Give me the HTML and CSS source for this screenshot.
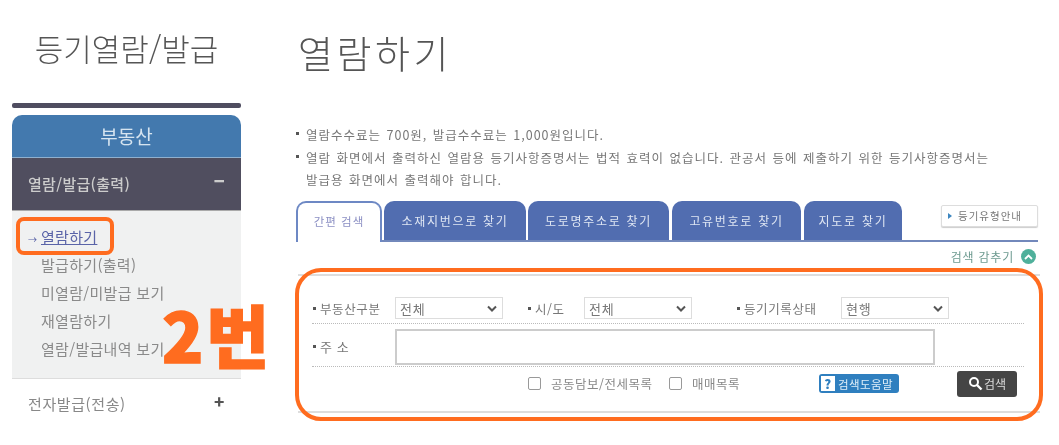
FILE: index.html
```html
<!DOCTYPE html>
<html lang="ko">
<head>
<meta charset="utf-8">
<title>열람하기</title>
<link rel="stylesheet" href="styles.css">
</head>
<body>
<div class="page">
  <aside class="side">
    <h2 class="side-title">등기열람/발급</h2>
    <div class="side-bar"></div>
    <div class="side-head">부동산</div>
    <div class="menu-open"><span>열람/발급(출력)</span><b class="sign">−</b></div>
    <ul class="sub">
      <li class="active"><span class="arrow">→</span><a href="#">열람하기</a><span class="mark-box"></span></li>
      <li>발급하기(출력)</li>
      <li>미열람/미발급 보기</li>
      <li>재열람하기</li>
      <li>열람/발급내역 보기</li>
    </ul>
    <div class="menu-closed"><span>전자발급(전송)</span><b class="sign">+</b></div>
    <div class="big-mark">2번</div>
  </aside>
  <main class="main">
    <h1 class="title">열람하기</h1>
    <ul class="notes">
      <li>열람수수료는 700원, 발급수수료는 1,000원입니다.</li>
      <li>열람 화면에서 출력하신 열람용 등기사항증명서는 법적 효력이 없습니다. 관공서 등에 제출하기 위한 등기사항증명서는<br>발급용 화면에서 출력해야 합니다.</li>
    </ul>
    <div class="tabs">
      <div class="tab on t1">간편 검색</div>
      <div class="tab t2">소재지번으로 찾기</div>
      <div class="tab t3">도로명주소로 찾기</div>
      <div class="tab t4">고유번호로 찾기</div>
      <div class="tab t5">지도로 찾기</div>
      <div class="guide"><i class="tri"></i>등기유형안내</div>
    </div>
    <div class="hide-row">검색 감추기<span class="circle"><svg width="9" height="6" viewBox="0 0 9 6"><path d="M1 5 4.500 1.500 8 5" fill="none" stroke="#fff" stroke-width="1.800"/></svg></span></div>
    <form class="form">
      <div class="row r1">
        <label class="lbl l1">부동산구분</label>
        <select class="sel"><option>전체</option></select>
        <label class="lbl l2">시/도</label>
        <select class="sel"><option>전체</option></select>
        <label class="lbl l3">등기기록상태</label>
        <select class="sel"><option>현행</option></select>
      </div>
      <div class="row r2">
        <label class="lbl l1 addr">주 소</label>
        <input class="addr-input" type="text">
      </div>
      <div class="r3">
        <input class="chk c1" type="checkbox"><span class="chk-text">공동담보/전세목록</span>
        <input class="chk c2" type="checkbox"><span class="chk-text">매매목록</span>
        <span class="help"><b class="q">?</b>검색도움말</span>
        <span class="search"><svg width="15" height="15" viewBox="0 0 15 15"><circle cx="6" cy="6" r="4" fill="none" stroke="#fff" stroke-width="2"/><path d="M9 9l4.500 4.500" stroke="#fff" stroke-width="2.400"/></svg>검색</span>
      </div>
      <span class="form-mark"></span>
    </form>
  </main>
</div>
</body>
</html>
```
FILE: styles.css
```css
* { box-sizing: border-box; }
html, body { margin: 0; padding: 0; background: #fff; }
body { font-family: "Noto Sans CJK KR", "Noto Sans", sans-serif; color: #777; width: 1059px; height: 445px; overflow: hidden; }
ul { list-style: none; margin: 0; padding: 0; }
.page { display: flex; padding-left: 12px; filter: blur(0.6px); }
.side { position: relative; width: 229px; margin-right: 55px; flex: none; }
.side-title { margin: 0; height: 103px; padding-top: 25px; text-align: center; font-size: 31px; line-height: 46px; font-weight: 300; color: #555; white-space: nowrap; }
.side-bar { height: 5px; background: #4f4d60; border-radius: 2px; margin-bottom: 7px; }
.side-head { height: 43px; background: #4379ae; border-radius: 10px 10px 0 0; color: #d6e4f0; text-align: center; font-size: 19px; line-height: 41px; border-bottom: 1px solid #8fb0cf; }
.menu-open { height: 53px; background: #504e5f; color: #ccc; font-size: 15px; letter-spacing: 0.3px; display: flex; justify-content: space-between; align-items: center; padding: 0 16px 2px; border-bottom: 1px solid #aaa; font-weight: 500; }
.sign { font-size: 18px; font-weight: 900; line-height: 1; position: relative; top: -3px; }
.sub { height: 168px; background: #f0f1f1; padding-top: 12px; border-bottom: 1px solid #ddd; font-size: 15px; letter-spacing: 0.3px; }
.sub li { position: relative; height: 28px; line-height: 28px; padding-left: 29px; color: #8a8a8a; white-space: nowrap; }
.sub .active { color: #5a64a8; padding-left: 16px; }
.arrow { display: inline-block; width: 13px; font-size: 9px; }
.active a { color: #5a64a8; text-decoration: underline; }
.mark-box { position: absolute; left: 4px; top: -6px; width: 98px; height: 38px; border: 4px solid #ff6c1f; border-radius: 8px; }
.menu-closed { height: 49px; color: #888; font-size: 15px; letter-spacing: 0.6px; display: flex; justify-content: space-between; align-items: center; padding: 0 16px; }
.menu-closed .sign { color: #555; font-size: 17px; }
.big-mark { position: absolute; left: 150px; top: 286px; font-size: 68px; line-height: 96px; font-weight: 900; color: #ff6c1f; -webkit-text-stroke: 1.5px #ff6c1f; letter-spacing: 3px; white-space: nowrap; }
.main { position: relative; width: 742px; flex: none; }
.title { margin: 0; height: 124px; padding: 27px 0 0 2px; font-size: 38px; line-height: 50px; font-weight: 300; color: #555; letter-spacing: 3.5px; }
.notes { font-size: 12.5px; line-height: 22.500px; color: #777; height: 77px; letter-spacing: 1px; word-spacing: 1px; }
.notes li { position: relative; padding-left: 10px; }
.notes li::before { content: ""; position: absolute; left: 0; top: 8px; width: 3px; height: 3px; background: #555; }
.tabs { display: flex; align-items: flex-start; height: 41px; border-bottom: 2px solid #7288bb; position: relative; }
.tab { height: 39px; margin-right: 2px; background: #516db0; color: #dfe6f3; border-radius: 10px 10px 0 0; font-size: 12px; line-height: 40px; text-align: center; letter-spacing: 1.7px; flex: none; }
.tab.on { background: #fff; color: #8c90c4; border: 2px solid #6d88c4; border-bottom: 0; height: 41px; font-size: 11.5px; line-height: 36px; letter-spacing: 1px; }
.t1 { width: 86px; }
.t2 { width: 142px; }
.t3 { width: 141px; margin-right: 3px; }
.t4 { width: 129px; margin-right: 3px; }
.t5 { width: 98px; }
.guide { margin: 4px 0 0 37px; width: 98px; height: 22px; border: 1px solid #ddd; border-radius: 2px; box-shadow: 0 1px 1px #ccc; font-size: 10.5px; line-height: 20px; color: #777; display: flex; align-items: center; padding-left: 6px; white-space: nowrap; letter-spacing: 1px; background: #fff; }
.tri { width: 0; height: 0; border-left: 4px solid #3d86c0; border-top: 3px solid transparent; border-bottom: 3px solid transparent; margin-right: 6px; }
.hide-row { height: 28px; display: flex; justify-content: flex-end; align-items: center; font-size: 12px; color: #6d9a90; letter-spacing: 0.8px; padding-top: 1px; padding-right: 2px; }
.circle { width: 15px; height: 15px; border-radius: 50%; background: #4fb09b; margin-left: 7px; display: flex; align-items: center; justify-content: center; }
.form { position: relative; margin: 4px -2px 0 2px; height: 139px; border-top: 2px solid #ddd; border-bottom: 2px solid #ddd; padding: 0 16px 0 14px; font-size: 12px; color: #777; }
.row { display: flex; align-items: center; border-bottom: 1px dotted #bbb; }
.r1 { height: 48px; padding-top: 21px; padding-bottom: 4px; }
.r2 { height: 43px; padding-top: 3px; }
.lbl { position: relative; padding-left: 8px; flex: none; white-space: nowrap; font-size: 12.5px; letter-spacing: 0.6px; }
.lbl::before { content: ""; position: absolute; left: 1px; top: 8px; width: 3px; height: 3px; background: #555; }
.l1 { width: 83px; }
.l2 { width: 57px; margin-left: 24px; }
.l3 { width: 105px; margin-left: 44px; }
.addr { font-size: 13px; }
.sel { appearance: none; width: 108px; height: 22px; flex: none; border: 1px solid #ddd; color: #777; font-family: inherit; font-size: 13px; letter-spacing: 0.8px; padding: 0 0 0 4px; background: #fff url("data:image/svg+xml,%3Csvg xmlns='http://www.w3.org/2000/svg' width='10' height='7' viewBox='0 0 10 7'%3E%3Cpath d='M1 1.500 5 5.500 9 1.500' fill='none' stroke='%23555' stroke-width='2'/%3E%3C/svg%3E") no-repeat right 5px center; }
.addr-input { width: 540px; height: 36px; border: 2px solid #ccc; flex: none; }
.r3 { display: flex; align-items: center; height: 33px; padding-left: 216px; white-space: nowrap; }
.chk { appearance: none; width: 13px; height: 13px; margin: 0; flex: none; border: 1.5px solid #999; border-radius: 2px; background: #fff; }
.chk-text { margin-left: 10px; font-size: 12.5px; letter-spacing: 0.5px; color: #888; width: 100px; }
.c2 + .chk-text { width: 48px; }
.c2 { margin-left: 18px; }
.help { margin-left: 79px; width: 80px; height: 19px; background: #2f7fbf; border-radius: 3px; color: #dfeef8; font-size: 11.5px; letter-spacing: 0.4px; display: flex; align-items: center; padding-left: 2px; flex: none; }
.q { width: 14px; height: 15px; background: #fff; color: #2f7fbf; font-size: 13px; line-height: 15px; text-align: center; margin-right: 3px; font-weight: 900; }
.search { margin-left: 58px; width: 60px; height: 26px; background: #454545; border-radius: 3px; color: #ddd; font-size: 12px; display: flex; align-items: center; justify-content: center; gap: 1px; flex: none; }
.form-mark { position: absolute; left: -3px; top: -8px; width: 748px; height: 153px; border: 4px solid #ff6c1f; border-radius: 26px; pointer-events: none; }
```
